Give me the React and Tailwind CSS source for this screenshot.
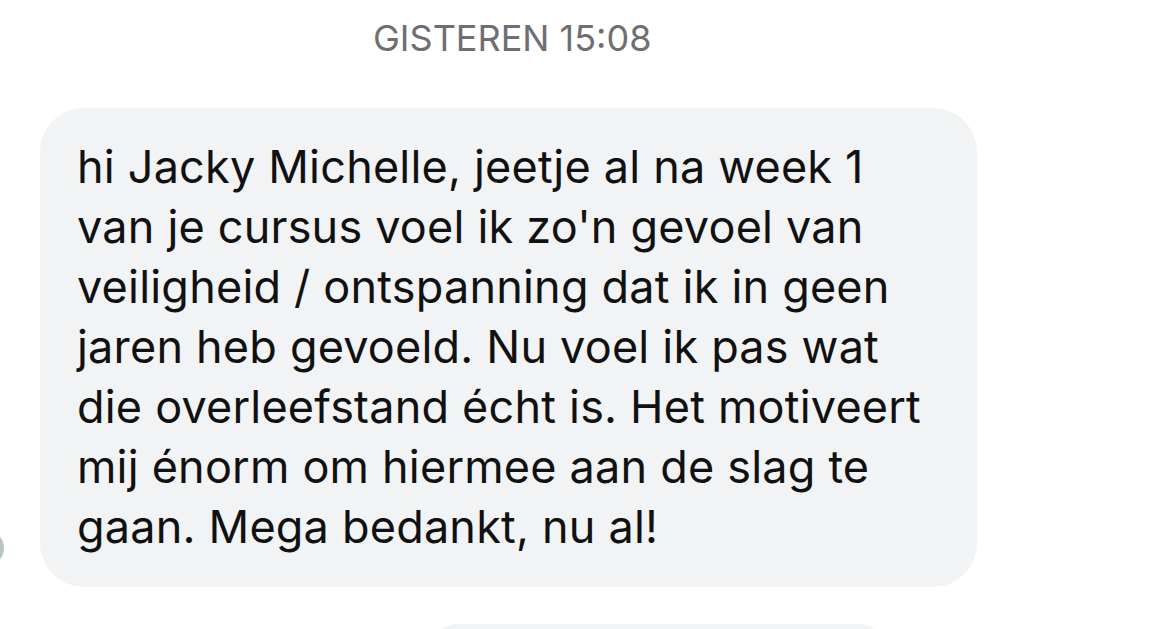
const lines = [
  "hi Jacky Michelle, jeetje al na week 1",
  "van je cursus voel ik zo'n gevoel van",
  "veiligheid / ontspanning dat ik in geen",
  "jaren heb gevoeld. Nu voel ik pas wat",
  "die overleefstand écht is. Het motiveert",
  "mij énorm om hiermee aan de slag te",
  "gaan. Mega bedankt, nu al!",
];

export default function App() {
  return (
    <div className="relative h-[629px] w-[1155px] overflow-hidden bg-white font-['Inter',sans-serif]">
      <div className="pt-[16px] pl-[373px] text-[36px] leading-[44px] text-[#6e6e73]">
        GISTEREN 15:08
      </div>
      <div className="mt-[48px] flex items-end">
        <div className="absolute left-[-32px] top-[530px] h-[36px] w-[36px] rounded-full bg-[#b4c7c2]" />
        <div className="ml-[40px] w-[937px] rounded-[44px] bg-[#f2f3f5] pl-[37px] pt-[29px] pb-[30px] text-[45px] leading-[60px] tracking-[0.2px] text-[#111111]">
          {lines.map((line) => (
            <div key={line}>{line}</div>
          ))}
        </div>
      </div>
      <div className="ml-[428px] mt-[37px] h-[40px] w-[460px] rounded-t-[30px] bg-[#f2f3f5]" />
    </div>
  );
}
